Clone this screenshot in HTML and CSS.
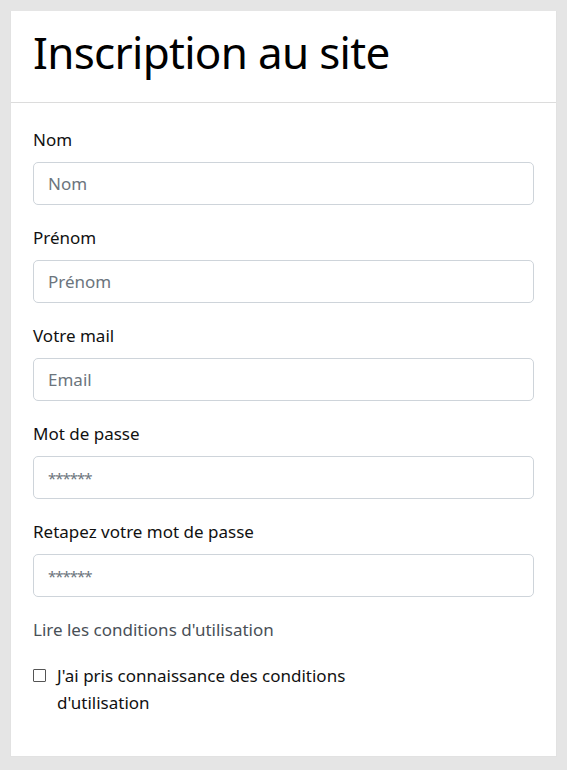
FILE: index.html
```html
<!DOCTYPE html>
<html lang="fr">
<head>
<meta charset="utf-8">
<title>Inscription au site</title>
<link rel="stylesheet" href="styles.css">
</head>
<body>
<div class="card">
  <div class="card-header">
    <h1 class="title">Inscription au site</h1>
  </div>
  <form class="card-body">
    <div class="group">
      <label class="label" for="nom">Nom</label>
      <input class="control" id="nom" type="text" placeholder="Nom">
    </div>
    <div class="group">
      <label class="label" for="prenom">Prénom</label>
      <input class="control" id="prenom" type="text" placeholder="Prénom">
    </div>
    <div class="group">
      <label class="label" for="mail">Votre mail</label>
      <input class="control" id="mail" type="email" placeholder="Email">
    </div>
    <div class="group">
      <label class="label" for="mdp">Mot de passe</label>
      <input class="control pw" id="mdp" type="password" placeholder="******">
    </div>
    <div class="group">
      <label class="label" for="mdp2">Retapez votre mot de passe</label>
      <input class="control pw" id="mdp2" type="password" placeholder="******">
    </div>
    <div class="group">
      <a class="conditions" href="#">Lire les conditions d'utilisation</a>
    </div>
    <div class="group check">
      <input class="check-input" id="cgu" type="checkbox">
      <label class="check-label" for="cgu">J'ai pris connaissance des conditions d'utilisation</label>
    </div>
  </form>
</div>
</body>
</html>
```
FILE: styles.css
```css
html, body {
  margin: 0;
  padding: 0;
}
body {
  background: #e5e5e5;
  font-family: "Noto Sans", "Open Sans", sans-serif;
  font-size: 17px;
  line-height: 27px;
  color: #212529;
  padding: 11px 10px 13px 10px;
  box-sizing: border-box;
  min-height: 770px;
}
.card {
  background: #fff;
  border: 1px solid #e2e2e2;
  border-top: 0;
}
.card-header {
  padding: 14px 22px 0 22px;
  height: 77px;
  border-bottom: 1px solid #dcdcdc;
}
.title {
  margin: 0;
  font-weight: 400;
  font-size: 44px;
  line-height: 54px;
  color: #000;
  letter-spacing: -0.7px;
}
.card-body {
  display: block;
  padding: 23px 22px 21px 22px;
  margin: 0;
}
.group {
  margin-bottom: 19px;
}
.label {
  display: block;
  height: 27px;
  margin-bottom: 9px;
  color: #111;
}
.control {
  display: block;
  box-sizing: border-box;
  width: 100%;
  height: 43px;
  padding: 0 14px;
  border: 1px solid #ced4da;
  border-radius: 5px;
  font-family: inherit;
  font-size: 17px;
  color: #495057;
  background: #fff;
  outline: none;
}
.control::placeholder {
  color: #6c757d;
  opacity: 1;
}
.control.pw::placeholder {
  font-size: 15px;
  letter-spacing: -1px;
}
.conditions {
  color: #495057;
  text-decoration: none;
}
.check {
  display: flex;
  align-items: flex-start;
}
.check-input {
  appearance: none;
  -webkit-appearance: none;
  width: 13px;
  height: 13px;
  margin: 7px 11px 0 0;
  border: 1px solid #555;
  border-radius: 1px;
  background: #fff;
  flex: none;
  box-sizing: border-box;
}
.check-label {
  width: 300px;
  color: #111;
}
```
